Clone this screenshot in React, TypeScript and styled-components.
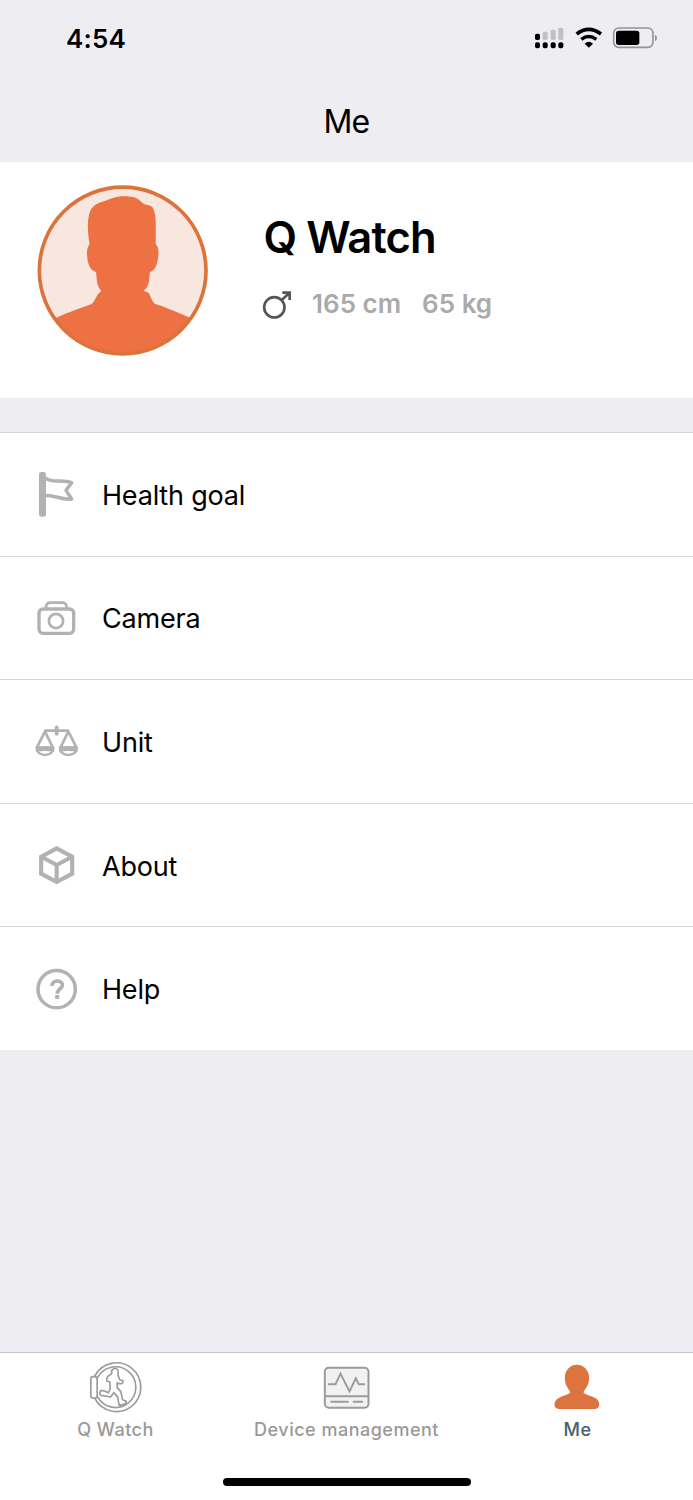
import React from "react";
import styled, { createGlobalStyle } from "styled-components";

const GlobalStyle = createGlobalStyle`
  * { box-sizing: border-box; }
  body { margin: 0; background: #eeedf2; }
`;

const Screen = styled.main`
  display: flex;
  flex-direction: column;
  width: 693px;
  height: 1500px;
  overflow: hidden;
  background: #eeedf2;
  color: #000;
  font-family: Inter, "Liberation Sans", sans-serif;
`;

const StatusBar = styled.div`
  display: flex;
  justify-content: space-between;
  align-items: center;
  height: 76px;
  padding: 0 33px 0 66px;
`;

const Clock = styled.span`
  padding-top: 2px;
  font-size: 26px;
  font-weight: 600;
  line-height: 32px;
  letter-spacing: 0.15px;
`;

const NavBar = styled.header`
  display: flex;
  justify-content: center;
  align-items: center;
  height: 86px;
  padding-top: 6px;
`;

const Title = styled.h1`
  margin: 0;
  font-size: 32px;
  font-weight: 400;
  line-height: 40px;
  letter-spacing: -0.8px;
`;

const Profile = styled.section`
  display: flex;
  align-items: flex-start;
  height: 236px;
  margin-bottom: 34px;
  padding: 23px 37px;
  background: #fff;
`;

const ProfileText = styled.div`
  display: flex;
  flex-direction: column;
  gap: 23px;
  padding: 25px 0 0 54px;
`;

const Name = styled.h2`
  margin: 0;
  padding-left: 1.5px;
  font-size: 43.5px;
  font-weight: 600;
  line-height: 54px;
  letter-spacing: -0.9px;
`;

const Stats = styled.div`
  display: flex;
  align-items: center;
  height: 34px;
  color: #aaa;
  font-size: 26px;
  font-weight: 600;
  line-height: 32px;
`;

const Stat = styled.span<{ $gap: number }>`
  margin-left: ${(p) => p.$gap}px;
  white-space: nowrap;
`;

const Menu = styled.ul`
  margin: 0;
  padding: 0;
  list-style: none;
`;

const MenuRow = styled.li`
  display: flex;
  align-items: center;
  height: 123.6px;
  padding-left: 35px;
  border-top: 1px solid #d9d9db;
  background: #fff;
`;

const MenuIcon = styled.svg`
  width: 44px;
  height: 48px;
  fill: none;
  stroke: #b2b2b2;
  stroke-linejoin: round;
  stroke-linecap: round;
`;

const MenuLabel = styled.span`
  margin-left: 23px;
  padding-top: 3px;
  font-size: 27px;
  line-height: 34px;
  letter-spacing: -0.2px;
`;

const TabBar = styled.nav`
  display: grid;
  grid-template-columns: repeat(3, 1fr);
  grid-template-rows: 86px 1fr;
  height: 148px;
  margin-top: auto;
  padding-top: 4px;
  border-top: 1px solid #c6c6c9;
  background: #fff;
`;

const Tab = styled.div<{ $active?: boolean }>`
  display: flex;
  flex-direction: column;
  align-items: center;
  gap: 1px;
  color: ${(p) => (p.$active ? "#46606f" : "#999")};
  font-size: 18px;
  font-weight: 500;
  line-height: 24px;
  letter-spacing: 0.5px;
`;

const TabIcon = styled.svg`
  flex: none;
  width: 60px;
  height: 60px;
  fill: none;
  stroke: #9b9b9b;
  stroke-linejoin: round;
  stroke-linecap: round;
`;

const HomeIndicator = styled.div`
  grid-column: 1 / -1;
  justify-self: center;
  width: 248px;
  height: 8px;
  margin-top: 35px;
  border-radius: 4px;
  background: #000;
`;

const StatusIcons = () => (
  <svg width="130" height="36" viewBox="30 15 390 108">
    <g fill="#bfbfc4">
      <rect x="68" y="50" width="15" height="25" rx="5" />
      <rect x="92" y="44" width="15" height="31" rx="5" />
      <rect x="115" y="38" width="15" height="37" rx="5" />
    </g>
    <rect x="45" y="56" width="15" height="19" rx="5" />
    {[45, 68, 92, 115].map((x) => (
      <rect key={x} x={x} y="82" width="15" height="18" rx="6" />
    ))}
    <g fill="none" stroke="#000" strokeWidth="10.5">
      <path d="M170 57 Q206 29 243 57" />
      <path d="M184 73 Q206 56 229 73" />
    </g>
    <path d="M194 86 Q206 75 219 86 L206.500 98Z" />
    <rect x="281" y="39" width="118" height="58" rx="15" fill="none" stroke="#939398" strokeWidth="5" />
    <rect x="288" y="47" width="70" height="43" rx="8" />
    <path d="M405 59 Q411 62 411 69 Q411 76 405 79Z" fill="#939398" />
  </svg>
);

const Avatar = () => (
  <svg width="171" height="171" viewBox="22 30 513 513">
    <defs>
      <clipPath id="face">
        <circle cx="279" cy="286.500" r="250" />
      </clipPath>
    </defs>
    <circle cx="279" cy="286.500" r="250" fill="#f8e7df" />
    <path
      clipPath="url(#face)"
      fill="#ee7144"
      d="M20 455 L78 429 C115 411 160 397 187 386 C197 378 200 357 215 349 C208 339 204 331 202 321 L199 291 C180 286 173 264 172 238 Q171 218 180 207 C174 180 173 145 177 125 C181 98 197 88 213 82 C230 77 247 67 264 65 C280 63 298 64 311 66 C325 70 333 79 343 87 C354 91 366 90 371 101 C380 119 379 160 378 207 C389 218 387 235 385 250 C382 270 377 286 361 291 C358 306 360 319 355 330 Q351 341 342 348 C351 351 356 351 360 359 Q366 377 375 386 C405 395 440 410 481 428 L540 455 V560 H20Z"
    />
    <circle cx="279" cy="286.500" r="250" fill="none" stroke="#dc733b" strokeWidth="11" />
  </svg>
);

const MaleIcon = () => (
  <svg width="30" height="32" viewBox="36 250 90 96" fill="none" stroke="#555" strokeWidth="8">
    <circle cx="73" cy="308" r="30.500" />
    <path d="M95 286 L118 265 M97 264 H119 V286" />
  </svg>
);

const FlagIcon = () => (
  <MenuIcon viewBox="45 30 132 144">
    <rect x="57" y="36" width="21" height="134" rx="7" fill="#b2b2b2" stroke="none" />
    <path d="M76 54 C98 72 124 55 155 68 L138 91 L155 117 C123 121 103 104 76 107" strokeWidth="10.500" />
  </MenuIcon>
);

const CameraIcon = () => (
  <MenuIcon viewBox="45 12 132 144" strokeWidth="10">
    <rect x="57" y="57" width="104" height="73" rx="12" />
    <path d="M78 51 C79 41 83 38 91 38 H127 C136 38 139 42 140 51" strokeWidth="8" />
    <circle cx="108" cy="93" r="21.500" strokeWidth="8" />
  </MenuIcon>
);

const ScaleIcon = () => (
  <MenuIcon viewBox="45 7 132 144" strokeWidth="8">
    <path d="M76 48 H144" />
    <path d="M110 38 V58" strokeWidth="11" />
    <path d="M75 50 L52 96 M75 50 L97 96 M145 50 L123 96 M145 50 L168 96" />
    <g strokeWidth="7">
      <path d="M50 98 H100 C102 112 90 121 75 121 C60 121 48 112 50 98Z" />
      <path d="M120 98 H170 C172 112 160 121 145 121 C130 121 118 112 120 98Z" />
    </g>
    <g fill="#b2b2b2" stroke="none">
      <path d="M48 95 H102 V111 Q75 107 48 111Z" />
      <path d="M118 95 H172 V111 Q145 107 118 111Z" />
    </g>
  </MenuIcon>
);

const BoxIcon = () => (
  <MenuIcon viewBox="45 18 132 144" strokeWidth="12.500">
    <path d="M110 40 L156.500 65 V116 L110 141 L63.500 116 V65Z M65 66 L110 90 L155 66 M110 90 V140" strokeLinejoin="miter" strokeLinecap="butt" />
  </MenuIcon>
);

const HelpIcon = () => (
  <MenuIcon viewBox="45 389 132 144">
    <circle cx="110" cy="461.500" r="56" strokeWidth="10.500" />
    <path d="M96 452 C94 433 128 432 127 450 C126 461 112 460 112 475" strokeWidth="11" strokeLinecap="butt" />
    <circle cx="111.500" cy="485" r="7" fill="#b2b2b2" stroke="none" />
  </MenuIcon>
);

const WatchIcon = () => (
  <TabIcon viewBox="48.500 36 180 180" strokeWidth="5">
    <path d="M75 93 A73 73 0 1 1 75 160" />
    <path d="M83 98 A61 61 0 1 1 83 155" />
    <rect x="63" y="95" width="19" height="64" rx="7" />
    <path d="M126 83 C122 71 140 67 144 75 C147 83 143 88 145 92 L150 105 L158 106 Q162 112 156 116 L147 116 L142 113 L142 128 L153 140 L158 164 L169 169 Q169 178 158 179 L148 181 L143 155 L132 143 L122 156 L106 153 L93 151 Q86 145 94 136 L104 138 L116 143 L121 132 L120 111 L111 108 Q109 101 114 94 L122 89Z" />
  </TabIcon>
);

const DeviceIcon = () => (
  <TabIcon viewBox="215.500 36 180 180" strokeWidth="6">
    <rect x="239" y="68" width="131" height="120" rx="12" fill="#f2f2f2" />
    <path d="M240 154 H369 M258 170 H308 M325 170 H351" />
    <path d="M251 118 H271 L286 86 L313 139 L332 100 L341 118 H357" strokeLinejoin="miter" />
  </TabIcon>
);

const PersonIcon = () => (
  <TabIcon viewBox="53.500 36 180 180">
    <path
      fill="#dd7440"
      stroke="none"
      d="M140 59 C161 59 177 76 177 98 C177 119 166 130 160 141 C161 150 185 151 200 162 Q208 169 207 180 Q206 191 195 192 H86 Q74 191 73 181 Q72 170 80 163 C94 152 119 149 120 141 C113 129 104 119 104 99 C104 76 119 59 140 59Z"
    />
  </TabIcon>
);

const menu = [
  { label: "Health goal", Icon: FlagIcon },
  { label: "Camera", Icon: CameraIcon },
  { label: "Unit", Icon: ScaleIcon },
  { label: "About", Icon: BoxIcon },
  { label: "Help", Icon: HelpIcon },
];

const tabs = [
  { label: "Q Watch", Icon: WatchIcon },
  { label: "Device management", Icon: DeviceIcon },
  { label: "Me", Icon: PersonIcon, active: true },
];

export default function App() {
  return (
    <Screen>
      <GlobalStyle />
      <StatusBar>
        <Clock>4:54</Clock>
        <StatusIcons />
      </StatusBar>
      <NavBar>
        <Title>Me</Title>
      </NavBar>
      <Profile>
        <Avatar />
        <ProfileText>
          <Name>Q Watch</Name>
          <Stats>
            <MaleIcon />
            <Stat $gap={20}>165 cm</Stat>
            <Stat $gap={21}>65 kg</Stat>
          </Stats>
        </ProfileText>
      </Profile>
      <Menu>
        {menu.map(({ label, Icon }) => (
          <MenuRow key={label}>
            <Icon />
            <MenuLabel>{label}</MenuLabel>
          </MenuRow>
        ))}
      </Menu>
      <TabBar>
        {tabs.map(({ label, Icon, active }) => (
          <Tab key={label} $active={active}>
            <Icon />
            <span>{label}</span>
          </Tab>
        ))}
        <HomeIndicator />
      </TabBar>
    </Screen>
  );
}
